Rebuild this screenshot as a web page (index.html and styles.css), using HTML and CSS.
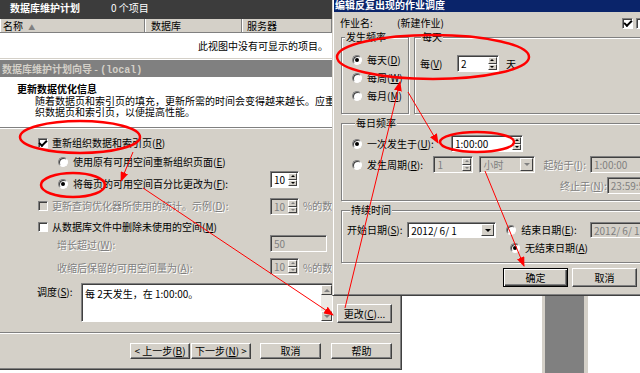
FILE: index.html
```html
<!DOCTYPE html>
<html lang="zh-CN">
<head>
  <meta charset="UTF-8" />
  <title>编辑反复出现的作业调度</title>
  <link rel="stylesheet" href="styles.css">
</head>
<body>

<!-- Console list behind the windows -->
<div class="console">
  <div class="console-bar"><b>数据库维护计划</b><span>0 个项目</span></div>
  <div class="list-head">
    <div class="col col-name">名称 <span class="sort">▲</span></div>
    <div class="col col-db">数据库</div>
    <div class="col col-srv">服务器</div>
  </div>
  <div class="list-empty">此视图中没有可显示的项目。</div>
</div>

<div class="strip"></div>

<!-- Maintenance plan wizard -->
<div class="win wizard">
  <div class="wiz-title">数据库维护计划向导 - <span class="mono">(local)</span></div>
  <div class="wiz-head">
    <div class="wiz-h1">更新数据优化信息</div>
    <div class="wiz-desc">随着数据页和索引页的填充，更新所需的时间会变得越来越长。应重新组</div>
    <div class="wiz-desc">织数据页和索引页，以便提高性能。</div>
  </div>

  <div class="wiz-body">
    <div class="row r1 ind1"><span class="chk on"></span>重新组织数据和索引页(<u>R</u>)</div>
    <div class="row r2 ind2"><span class="radio"></span>使用原有可用空间重新组织页面(<u>E</u>)</div>
    <div class="row r3">
      <div class="lead ind2"><span class="radio on"></span>将每页的可用空间百分比更改为(<u>F</u>):</div>
      <div class="spin s-pct"><span class="val">10</span><span class="arr"><i></i><i></i></span></div>
    </div>
    <div class="row r4">
      <div class="lead ind1 dis"><span class="chk off"></span>更新查询优化器所使用的统计。示例(<u>D</u>):</div>
      <div class="spin s-pct off"><span class="val">10</span><span class="arr"><i></i><i></i></span></div>
      <span class="pct dis">%的数据库</span>
    </div>
    <div class="row r5 ind1"><span class="chk"></span>从数据库文件中删除未使用的空间(<u>M</u>)</div>
    <div class="row r6">
      <div class="lead ind3 dis">增长超过(<u>W</u>):</div>
      <div class="field s-grow off"><span class="val">50</span></div>
    </div>
    <div class="row r7">
      <div class="lead ind3 dis">收缩后保留的可用空间量为(<u>A</u>):</div>
      <div class="spin s-pct off"><span class="val">10</span><span class="arr"><i></i><i></i></span></div>
      <span class="pct dis">%的数据库</span>
    </div>
    <div class="row r8">
      <span class="sched-lab">调度(<u>S</u>):</span>
      <div class="sched">
        <span class="txt">每 2天发生，在 1:00:00。</span>
        <span class="vbar"><i class="up"></i><i class="dn"></i></span>
      </div>
      <span class="btn b-change">更改(<u>C</u>)...</span>
    </div>
  </div>

  <div class="wiz-foot">
    <span class="btn b-wiz">&lt; 上一步(<u>B</u>)</span>
    <span class="btn b-wiz b-next">下一步(<u>N</u>) &gt;</span>
    <span class="btn b-wiz b-cancel">取消</span>
    <span class="btn b-wiz b-help">帮助</span>
  </div>
</div>

<!-- Schedule dialog -->
<div class="win dialog">
  <div class="dlg-title">编辑反复出现的作业调度</div>
  <div class="dlg-body">
    <div class="job-row">
      <span class="job-lab">作业名:</span>
      <span class="job-name">(新建作业)</span>
      <span class="chk on"></span>
      <span class="chk cut"></span>
    </div>

    <div class="freq-row">
      <fieldset class="grp g-freq">
        <legend>发生频率</legend>
        <div class="opt"><span class="radio on"></span>每天(<u>D</u>)</div>
        <div class="opt"><span class="radio"></span>每周(<u>W</u>)</div>
        <div class="opt"><span class="radio"></span>每月(<u>M</u>)</div>
      </fieldset>
      <fieldset class="grp g-day">
        <legend>每天</legend>
        <div class="day-row">
          <span class="day-lab">每(<u>V</u>)</span>
          <div class="spin s-every"><span class="val">2</span><span class="arr"><i></i><i></i></span></div>
          <span class="unit">天</span>
        </div>
      </fieldset>
    </div>

    <fieldset class="grp g-wide g-daily">
      <legend>每日频率</legend>
      <div class="drow">
        <div class="dlead"><span class="radio on"></span>一次发生于(<u>U</u>):</div>
        <div class="spin s-time"><span class="val">1:00:00</span><span class="arr"><i></i><i></i></span></div>
      </div>
      <div class="drow">
        <div class="dlead d2"><span class="radio"></span>发生周期(<u>R</u>):</div>
        <div class="spin s-num off"><span class="val">1</span><span class="arr"><i></i><i></i></span></div>
        <div class="combo s-unit off"><span class="val">小时</span><span class="drop"></span></div>
        <span class="tlab dis">起始于(<u>I</u>):</span>
        <div class="field s-hr off"><span class="val">1:00:00</span></div>
      </div>
      <div class="drow">
        <span class="tlab dis far">终止于(<u>N</u>):</span>
        <div class="field s-hr off"><span class="val">23:59:59</span></div>
      </div>
    </fieldset>

    <fieldset class="grp g-wide g-dur">
      <legend>持续时间</legend>
      <div class="urow">
        <span class="ulab">开始日期(<u>S</u>):</span>
        <div class="combo s-date"><span class="val">2012/ 6/ 1</span><span class="drop"></span></div>
        <div class="elead"><span class="radio"></span>结束日期(<u>E</u>):</div>
        <div class="field s-hr off"><span class="val">2012/ 6/ 1</span></div>
      </div>
      <div class="urow">
        <div class="elead far2"><span class="radio on"></span>无结束日期(<u>A</u>)</div>
      </div>
    </fieldset>

    <div class="dlg-btns">
      <span class="btn def">确定</span>
      <span class="btn">取消</span>
    </div>
  </div>
</div>

<!-- red annotations drawn on top -->
<svg class="marks" viewBox="0 0 640 373" width="640" height="373">
  <defs>
    <marker id="tip" viewBox="0 0 10 8" markerWidth="10" markerHeight="8" refX="9" refY="4" orient="auto" markerUnits="userSpaceOnUse">
      <path d="M0 0L10 4L0 8z" fill="#f00"/>
    </marker>
  </defs>
  <g fill="none" stroke="#f00" stroke-width="2.5">
    <ellipse cx="80" cy="137" rx="60" ry="16"/>
    <ellipse cx="73" cy="185" rx="32" ry="12"/>
    <ellipse cx="433" cy="57" rx="96" ry="22"/>
    <ellipse cx="477" cy="142" rx="37" ry="10"/>
  </g>
  <g stroke="#f00" stroke-width="1">
    <line x1="133" y1="152" x2="121" y2="181" marker-end="url(#tip)"/>
    <line x1="143" y1="188" x2="333" y2="315" marker-end="url(#tip)"/>
    <line x1="345" y1="308" x2="400" y2="82" marker-end="url(#tip)"/>
    <line x1="408" y1="92" x2="438" y2="143" marker-end="url(#tip)"/>
    <line x1="485" y1="171" x2="524" y2="266" marker-end="url(#tip)"/>
  </g>
</svg>

</body>
</html>
```

FILE: styles.css
```css
* {
  box-sizing: border-box;
}
body {
  margin: 0;
  width: 640px;
  height: 373px;
  overflow: hidden;
  position: relative;
  background: #fff;
  color: #000;
  font: 10px/12px "Noto Sans CJK SC", "Liberation Sans", sans-serif;
}
u {
  text-decoration: underline;
}
.mono {
  font-family: "Liberation Mono", monospace;
}
.dis {
  color: #808080;
  text-shadow: 1px 1px 0 #fff;
}

/* console list */
.console {
  width: 333px;
  border-right: 1px solid #404040;
}
.console-bar {
  height: 19px;
  display: flex;
  padding: 2px 0 0 10px;
  background: #3c3c3c;
  color: #fff;
}
.console-bar b {
  width: 101px;
}
.list-head {
  display: flex;
  height: 14px;
  background: #d4d0c8;
  border-bottom: 1px solid #808080;
}
.col {
  line-height: 13px;
  border-left: 1px solid #fff;
  border-right: 1px solid #808080;
  padding-left: 2px;
}
.col-name {
  width: 145px;
}
.col-db {
  width: 97px;
  padding-left: 5px;
}
.col-srv {
  flex: 1;
  padding-left: 4px;
}
.sort {
  color: #808080;
  font-size: 7px;
  margin-left: 3px;
}
.list-empty {
  height: 27px;
  padding: 7px 4px 0 0;
  text-align: right;
}
.strip {
  position: absolute;
  left: 542px;
  top: 290px;
  width: 46px;
  height: 90px;
  background: #808080;
  border-left: 3px solid #d4d0c8;
  border-right: 4px solid #d4d0c8;
}

/* window frame */
.win {
  position: absolute;
  display: flex;
  flex-direction: column;
  background: #d4d0c8;
  border: 1px solid;
  border-color: #d4d0c8 #404040 #404040 #d4d0c8;
  box-shadow: inset 1px 1px #fff, inset -1px -1px #808080;
  padding: 1px;
}

/* wizard */
.wizard {
  left: -2px;
  top: 58px;
  width: 404px;
  height: 312px;
}
.wiz-title {
  height: 17px;
  padding: 3px 0 0 2px;
  background: #808080;
  color: #d4d0c8;
  font-weight: bold;
  white-space: nowrap;
}
.wiz-head {
  height: 51px;
  padding: 6px 0 0 17px;
  background: #fff;
  border-bottom: 1px solid #808080;
  white-space: nowrap;
}
.wiz-h1 {
  font-weight: bold;
}
.wiz-desc {
  height: 11px;
  padding-left: 18px;
  line-height: 11px;
}
.wiz-body {
  height: 205px;
  padding-top: 5px;
  border-top: 1px solid #fff;
  border-bottom: 1px solid #808080;
}
.row {
  display: flex;
  align-items: center;
  white-space: nowrap;
}
.lead {
  width: 270px;
  display: flex;
  align-items: center;
  flex: none;
}
.ind1 { padding-left: 38px; }
.ind2 { padding-left: 58px; }
.ind3 { padding-left: 57px; }
.r1 { height: 18px; }
.r2 { height: 19px; }
.r3 { height: 27px; align-items: flex-start; }
.r3 .lead { margin-top: 7px; }
.r4 { height: 22px; align-items: flex-start; }
.r4 .lead, .r4 .pct { margin-top: 2px; }
.r5 { height: 14px; }
.r6 { height: 22px; align-items: flex-start; }
.r6 .lead { margin-top: 5px; }
.r6 .field { margin-top: 1px; }
.r7 { height: 22px; align-items: flex-start; }
.r7 .spin { margin-top: 2px; }
.r7 .lead, .r7 .pct { margin-top: 6px; }
.pct {
  margin-left: 4px;
}
.r8 {
  margin-top: 5px;
  padding-left: 37px;
  align-items: flex-start;
}
.sched-lab {
  width: 44px;
  margin-top: 3px;
}
.sched {
  width: 252px;
  height: 39px;
  display: flex;
  background: #fff;
  border: 1px solid;
  border-color: #808080 #fff #fff #808080;
  box-shadow: inset 1px 1px #404040;
  padding: 1px 0 0 1px;
}
.sched .txt {
  flex: 1;
  padding: 3px 0 0 2px;
}
.vbar {
  width: 11px;
  display: flex;
  flex-direction: column;
  justify-content: space-between;
  background: #ebe9e4;
}
.vbar i {
  height: 10px;
  display: flex;
  align-items: center;
  justify-content: center;
  background: #d4d0c8;
  border: 1px solid;
  border-color: #fff #404040 #404040 #fff;
}
.vbar i::after {
  content: "";
  border-left: 3px solid transparent;
  border-right: 3px solid transparent;
}
.vbar .up::after { border-bottom: 3px solid #808080; }
.vbar .dn::after { border-top: 3px solid #808080; }
.b-change {
  width: 55px;
  height: 19px;
  margin-left: 4px;
  margin-top: 21px;
}
.wiz-foot {
  display: flex;
  padding: 9px 0 0 130px;
  border-top: 1px solid #fff;
}
.b-wiz {
  width: 60px;
  height: 16px;
}
.b-next { margin-left: 1px; }
.b-cancel { width: 61px; margin-left: 9px; }
.b-help { width: 61px; margin-left: 10px; }

/* buttons */
.btn {
  display: flex;
  align-items: center;
  justify-content: center;
  background: #d4d0c8;
  border: 1px solid;
  border-color: #fff #404040 #404040 #fff;
  box-shadow: inset -1px -1px #808080;
  white-space: nowrap;
}
.btn.def {
  border-color: #000;
  box-shadow: inset 1px 1px #fff, inset -1px -1px #404040, inset -2px -2px #808080;
}

/* small controls */
.chk, .radio {
  width: 10px;
  height: 10px;
  flex: none;
  margin-right: 4px;
  display: flex;
  align-items: center;
  justify-content: center;
  background: #fff;
  border: 1px solid;
  border-color: #808080 #fff #fff #808080;
  box-shadow: inset 1px 1px #404040;
}
.radio {
  border-radius: 50%;
  margin-right: 5px;
}
.chk.off {
  background: #d4d0c8;
}
.chk.on::after {
  content: "";
  width: 6px;
  height: 3px;
  margin-top: -2px;
  border-left: 2px solid #000;
  border-bottom: 2px solid #000;
  transform: rotate(-45deg);
}
.radio.on::after {
  content: "";
  width: 4px;
  height: 4px;
  border-radius: 50%;
  background: #000;
}
.spin, .field, .combo {
  height: 17px;
  display: flex;
  flex: none;
  background: #fff;
  border: 1px solid;
  border-color: #808080 #fff #fff #808080;
  box-shadow: inset 1px 1px #404040;
  padding: 1px 1px 1px 1px;
  white-space: pre;
  overflow: hidden;
}
.off {
  background: #d4d0c8;
  color: #808080;
}
.val {
  flex: 1;
  padding-left: 2px;
  line-height: 13px;
}
.arr {
  width: 9px;
  display: flex;
  flex-direction: column;
}
.arr i, .drop {
  flex: 1;
  display: flex;
  align-items: center;
  justify-content: center;
  background: #d4d0c8;
  border: 1px solid;
  border-color: #fff #404040 #404040 #fff;
}
.arr i::after, .drop::after {
  content: "";
  border-left: 2px solid transparent;
  border-right: 2px solid transparent;
}
.arr i:first-child::after { border-bottom: 2px solid #000; }
.arr i:last-child::after { border-top: 2px solid #000; }
.off .arr i:first-child::after { border-bottom-color: #808080; }
.off .arr i:last-child::after { border-top-color: #808080; }
.drop {
  flex: none;
  width: 13px;
}
.drop::after {
  border-left-width: 3px;
  border-right-width: 3px;
  border-top: 3px solid #000;
}
.off .drop::after {
  border-top-color: #808080;
}
.s-pct { width: 29px; }
.s-grow { width: 57px; }
.s-every { width: 42px; }
.s-time { width: 72px; }
.s-num { width: 40px; }
.s-unit { width: 56px; margin-left: 6px; }
.s-hr { width: 60px; }
.s-date { width: 89px; }

/* schedule dialog */
.dialog {
  left: 332px;
  top: -4px;
  width: 320px;
  height: 300px;
}
.dlg-title {
  height: 14px;
  line-height: 14px;
  padding-left: 1px;
  background: #0a246a;
  color: #fff;
  font-weight: bold;
}
.dlg-body {
  padding-left: 7px;
}
.job-row {
  display: flex;
  align-items: center;
  height: 12px;
  margin-top: 5px;
}
.job-lab {
  width: 57px;
  margin-left: -1px;
}
.job-name {
  width: 225px;
}
.job-row .chk {
  width: 11px;
  height: 11px;
  margin-right: 3px;
}
.freq-row {
  display: flex;
  margin-top: 2px;
}
fieldset.grp {
  margin: 0;
  padding: 0;
  min-width: 0;
  border: 1px solid #808080;
  box-shadow: 1px 1px 0 #fff, inset 1px 1px 0 #fff;
}
.grp legend {
  margin-left: 3px;
  padding: 0 1px;
  line-height: 12px;
  background: #d4d0c8;
}
.g-freq {
  width: 69px;
  padding: 8px 0 8px 0 !important;
}
.opt {
  height: 18px;
  display: flex;
  align-items: center;
  margin-left: 10px;
  white-space: nowrap;
}
.g-day {
  width: 240px;
  margin-left: 5px !important;
}
.g-day legend {
  margin-left: 6px;
}
.day-row {
  display: flex;
  align-items: center;
  margin: 12px 0 0 5px;
}
.day-lab {
  width: 37px;
}
.unit {
  margin-left: 7px;
}
.g-wide {
  width: 310px;
  margin-top: 3px !important;
}
.g-daily {
  padding: 6px 0 6px 10px !important;
}
.drow {
  height: 17px;
  display: flex;
  align-items: center;
  white-space: nowrap;
}
.drow + .drow {
  margin-top: 4px;
}
.dlead {
  width: 99px;
  display: flex;
  align-items: center;
}
.dlead.d2 {
  width: 98px;
}
.tlab {
  width: 56px;
  margin-left: 8px;
}
.tlab.far {
  margin-left: 208px;
}
.g-dur {
  padding: 6px 0 6px 5px !important;
}
.urow {
  height: 16px;
  display: flex;
  align-items: center;
  white-space: nowrap;
}
.urow + .urow {
  margin-top: 2px;
}
.urow .combo, .urow .field {
  height: 16px;
}
.ulab {
  width: 64px;
}
.elead {
  width: 89px;
  margin-left: 10px;
  display: flex;
  align-items: center;
}
.elead.far2 {
  margin-left: 163px;
}
.dlg-btns {
  display: flex;
  margin: 5px 0 0 162px;
}
.dlg-btns .btn {
  width: 65px;
  height: 19px;
  margin-right: 4px;
}

/* annotation layer */
.marks {
  position: absolute;
  left: 0;
  top: 0;
  pointer-events: none;
}
```
